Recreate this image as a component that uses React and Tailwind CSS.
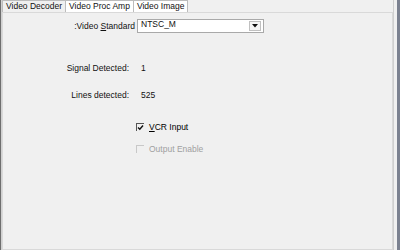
import React from 'react';

const tabs = ['Video Decoder', 'Video Proc Amp', 'Video Image'];

const Check = ({ checked, disabled, label, ul }) => (
  <div className={`flex items-center gap-[5px] ${disabled ? 'text-[#a0a0a0]' : 'text-black'}`}>
    <div className={`w-[8px] h-[8px] border-t border-l flex items-center justify-center ${disabled ? 'border-[#c8c8c8]' : 'border-[#555]'}`}>
      {checked && (
        <svg width="7" height="7" viewBox="0 0 7 7">
          <path d="M1 3.5 L2.8 5.3 L6 1.5" stroke="#111" strokeWidth="1.4" fill="none" />
        </svg>
      )}
    </div>
    <span>
      <span className="underline">{ul}</span>
      {label}
    </span>
  </div>
);

export default function App() {
  return (
    <div
      className="w-[400px] h-[250px] bg-[#f0f0f0] flex text-[8.5px] text-[#111] overflow-hidden"
      style={{ fontFamily: '"Liberation Sans", Arial, sans-serif' }}
    >
      {/* left window edge */}
      <div className="w-[2px] h-full bg-[#6e6e6e] border-r border-[#d0d0d0]" />
      <div className="flex-1 flex flex-col">
        {/* tab strip */}
        <div className="flex h-[12px] items-end">
          {tabs.map((t, i) => (
            <div
              key={t}
              className={`h-[12px] px-[3px] flex items-center leading-none border-t border-r border-[#bcbcbc] ${i === 0 ? 'border-l bg-[#f0f0f0]' : 'bg-white'}`}
            >
              {t}
            </div>
          ))}
        </div>
        {/* tab page */}
        <div className="flex-1 border border-[#d9d9d9] bg-[#f0f0f0]">
          <div className="flex items-center mt-[6px]">
            <div className="w-[134px] text-right pr-[2px] leading-none">
              :Video <span className="underline">S</span>tandard
            </div>
            <div className="w-[127px] h-[14px] bg-white border border-[#a9a9a9] flex items-center justify-between pl-[3px] pr-[2px]">
              <span className="leading-none -mt-[3px]">NTSC_M</span>
              <div className="w-[12px] h-[10px] border border-[#c0c0c0] bg-[#f6f6f6] flex items-center justify-center">
                <svg width="6" height="4" viewBox="0 0 6 4">
                  <path d="M0 0 L6 0 L3 3.5 Z" fill="#111" />
                </svg>
              </div>
            </div>
          </div>

          <div className="flex mt-[31px] leading-none">
            <div className="w-[126px] text-right">Signal Detected:</div>
            <div className="pl-[12px]">1</div>
          </div>
          <div className="flex mt-[18px] leading-none">
            <div className="w-[126px] text-right">Lines detected:</div>
            <div className="pl-[12px]">525</div>
          </div>

          <div className="flex flex-col gap-[13px] pl-[133px] mt-[24px] leading-none">
            <Check checked ul="V" label="CR Input" />
            <Check disabled ul="" label="Output Enable" />
          </div>
        </div>
      </div>
      {/* right edge */}
      <div className="w-[4px] h-full bg-[#f0f0f0] border-l border-[#cfcfcf]" />
      <div className="w-[3px] h-full bg-[#7b8190]" />
    </div>
  );
}
